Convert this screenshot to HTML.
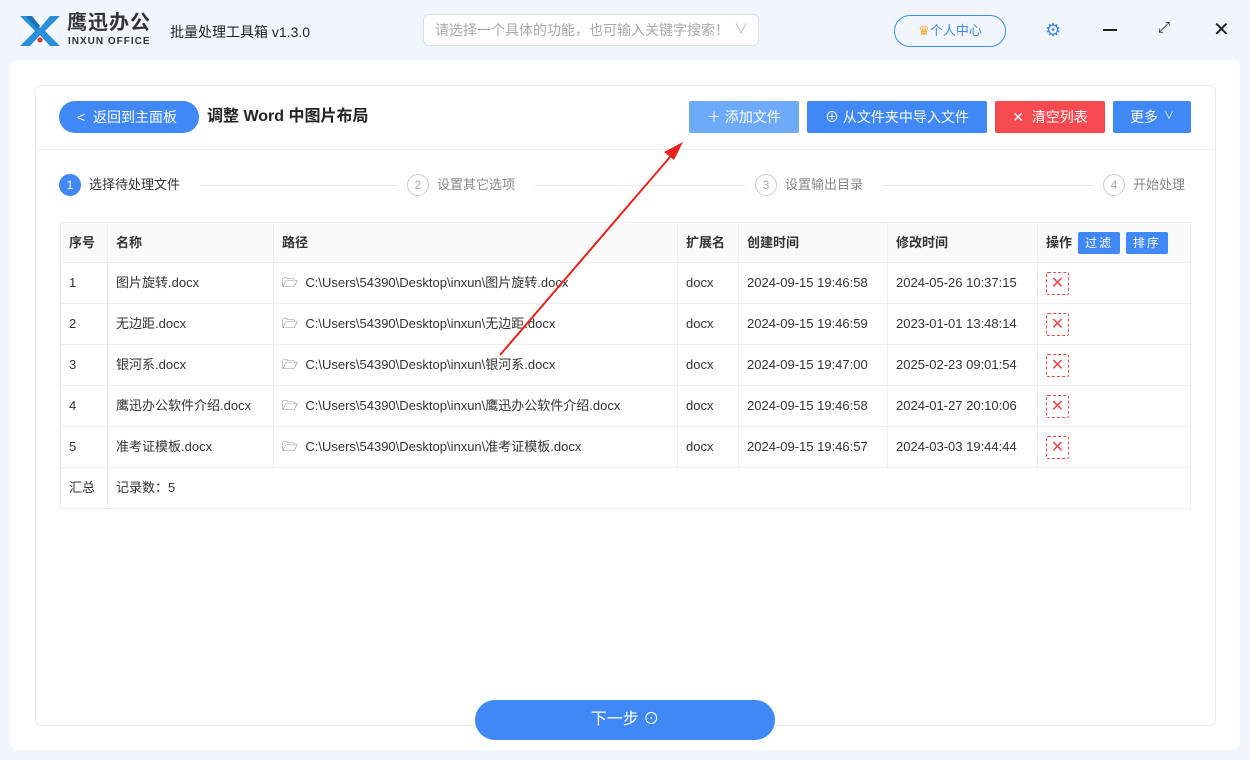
<!DOCTYPE html>
<html><head><meta charset="utf-8"><style>
*{margin:0;padding:0;box-sizing:border-box}
body{width:1250px;height:760px;background:#f1f6fe;font-family:"Liberation Sans","Noto Sans CJK SC",sans-serif;position:relative;overflow:hidden;font-size:13px;color:#333;line-height:1.2}
.abs{position:absolute}
.panel{left:10px;top:60px;width:1230px;height:690px;background:#fff;border-radius:8px}
.card{left:35px;top:85px;width:1181px;height:641px;border:1px solid #e8ebf0;border-radius:6px;background:#fff}
.btn{position:absolute;top:101px;height:32px;color:#fff;font-size:14px;display:flex;align-items:center;justify-content:center;border-radius:2px}
table{position:absolute;left:60px;top:222px;width:1131px;border-collapse:collapse}
td{border:1px solid #ebeef5;height:41px;padding:0 8px;font-size:13px;color:#333;line-height:16px}
tr.h td{font-weight:bold;background:#fafafa;height:40px}
.del{display:inline-block;width:23px;height:23px;border:1px dashed #f04848;border-radius:2px;color:#f04848;text-align:center;line-height:21px;font-size:16px;vertical-align:middle}
.sm{display:inline-block;background:#3f88f6;color:#fff;font-size:12px;padding:3px 7px;border-radius:2px;margin-left:6px;font-weight:normal;letter-spacing:2px}
.step{position:absolute;top:174px;display:flex;align-items:center;font-size:13px;color:#888}
.c{width:22px;height:22px;border-radius:50%;border:1px solid #ccc;text-align:center;line-height:20px;font-size:12px;margin-right:8px;color:#aaa}
.line{position:absolute;top:185px;height:1px;background:#e4e7ed}
</style></head><body>
<svg class="abs" style="left:18px;top:14px" width="44" height="34" viewBox="0 0 44 34"><path d="M2 2h10l10 12 10-12h10L27 17l15 15H32L22 21 12 32H2l15-15z" fill="#2a8fd6"/><path d="M8 2h6l8 10-3 3z" fill="#1b6fb5"/><circle cx="22" cy="26" r="2.5" fill="#e02b2b"/></svg>
<div class="abs" style="left:67px;top:12px;font-size:20px;line-height:22px;font-weight:bold;color:#333;letter-spacing:1px">鹰迅办公</div>
<div class="abs" style="left:68px;top:36px;font-size:10px;line-height:11px;font-weight:bold;color:#333;letter-spacing:1px">INXUN OFFICE</div>
<div class="abs" style="left:170px;top:24px;font-size:14px;color:#222">批量处理工具箱 v1.3.0</div>
<div class="abs" style="left:423px;top:14px;width:336px;height:32px;border:1px solid #dcdfe6;border-radius:6px;background:#fff;color:#aaa;font-size:14px;padding:7px 11px">请选择一个具体的功能，也可输入关键字搜索！<span style="position:absolute;right:10px;top:6px;color:#bbb">∨</span></div>
<div class="abs" style="left:894px;top:15px;width:112px;height:32px;border:1px solid #3f88f6;border-radius:16px;color:#3f88f6;font-size:13px;text-align:center;line-height:30px"><span style="color:#f5a623">♛</span>个人中心</div>
<div class="abs" style="left:1045px;top:20px;color:#3f88f6;font-size:18px">⚙</div>
<div class="abs" style="left:1103px;top:29px;width:14px;height:2px;background:#222"></div>
<div class="abs" style="left:1158px;top:19px;font-size:15px;color:#222">⤢</div>
<div class="abs" style="left:1213px;top:18px;font-size:20px;color:#222">✕</div>
<div class="abs panel"></div>
<div class="abs card"></div>
<div class="abs" style="left:35px;top:149px;width:1181px;height:1px;background:#eef0f4"></div>
<div class="abs" style="left:59px;top:101px;width:140px;height:32px;background:#3f88f6;border-radius:16px;color:#fff;font-size:14px;line-height:32px;padding-left:18px">&lt;&nbsp;&nbsp;返回到主面板</div>
<div class="abs" style="left:207px;top:107px;font-size:16px;line-height:20px;font-weight:bold;color:#222">调整 Word 中图片布局</div>
<div class="btn" style="left:689px;width:110px;background:#6eaafa">＋&nbsp;添加文件</div>
<div class="btn" style="left:807px;width:180px;background:#3f88f6">⊕&nbsp;从文件夹中导入文件</div>
<div class="btn" style="left:995px;width:110px;background:#f74a50">✕&nbsp;&nbsp;清空列表</div>
<div class="btn" style="left:1113px;width:78px;background:#3f88f6">更多 <span style="font-size:10px;margin-left:6px">∨</span></div>
<div class="step" style="left:59px;color:#333"><div class="c" style="background:#3f88f6;border-color:#3f88f6;color:#fff">1</div>选择待处理文件</div>
<div class="line" style="left:200px;width:197px"></div>
<div class="step" style="left:407px"><div class="c">2</div>设置其它选项</div>
<div class="line" style="left:535px;width:210px"></div>
<div class="step" style="left:755px"><div class="c">3</div>设置输出目录</div>
<div class="line" style="left:883px;width:210px"></div>
<div class="step" style="left:1103px"><div class="c">4</div>开始处理</div>
<table>
<tr class="h"><td style="width:47px">序号</td><td style="width:166px">名称</td><td style="width:404px">路径</td><td style="width:61px">扩展名</td><td style="width:149px">创建时间</td><td style="width:150px">修改时间</td><td>操作<span class="sm">过滤</span><span class="sm">排序</span></td></tr>
<tr><td>1</td><td>图片旋转.docx</td><td>🗁&nbsp; C:\Users\54390\Desktop\inxun\图片旋转.docx</td><td>docx</td><td>2024-09-15 19:46:58</td><td>2024-05-26 10:37:15</td><td><span class="del">✕</span></td></tr>
<tr><td>2</td><td>无边距.docx</td><td>🗁&nbsp; C:\Users\54390\Desktop\inxun\无边距.docx</td><td>docx</td><td>2024-09-15 19:46:59</td><td>2023-01-01 13:48:14</td><td><span class="del">✕</span></td></tr>
<tr><td>3</td><td>银河系.docx</td><td>🗁&nbsp; C:\Users\54390\Desktop\inxun\银河系.docx</td><td>docx</td><td>2024-09-15 19:47:00</td><td>2025-02-23 09:01:54</td><td><span class="del">✕</span></td></tr>
<tr><td>4</td><td>鹰迅办公软件介绍.docx</td><td>🗁&nbsp; C:\Users\54390\Desktop\inxun\鹰迅办公软件介绍.docx</td><td>docx</td><td>2024-09-15 19:46:58</td><td>2024-01-27 20:10:06</td><td><span class="del">✕</span></td></tr>
<tr><td>5</td><td>准考证模板.docx</td><td>🗁&nbsp; C:\Users\54390\Desktop\inxun\准考证模板.docx</td><td>docx</td><td>2024-09-15 19:46:57</td><td>2024-03-03 19:44:44</td><td><span class="del">✕</span></td></tr>
<tr><td style="height:39px">汇总</td><td colspan="6" style="border-left:1px solid #ebeef5">记录数：5</td></tr>
</table>
<svg class="abs" style="left:0;top:0" width="1250" height="760"><line x1="500" y1="355" x2="676" y2="150" stroke="#e8231e" stroke-width="2"/><polygon points="683,142 664,152 674,160" fill="#e8231e"/></svg>
<div class="abs" style="left:475px;top:700px;width:300px;height:40px;background:#3f88f6;border-radius:20px;color:#fff;font-size:16px;text-align:center;line-height:40px">下一步 ⊙</div>
</body></html>
